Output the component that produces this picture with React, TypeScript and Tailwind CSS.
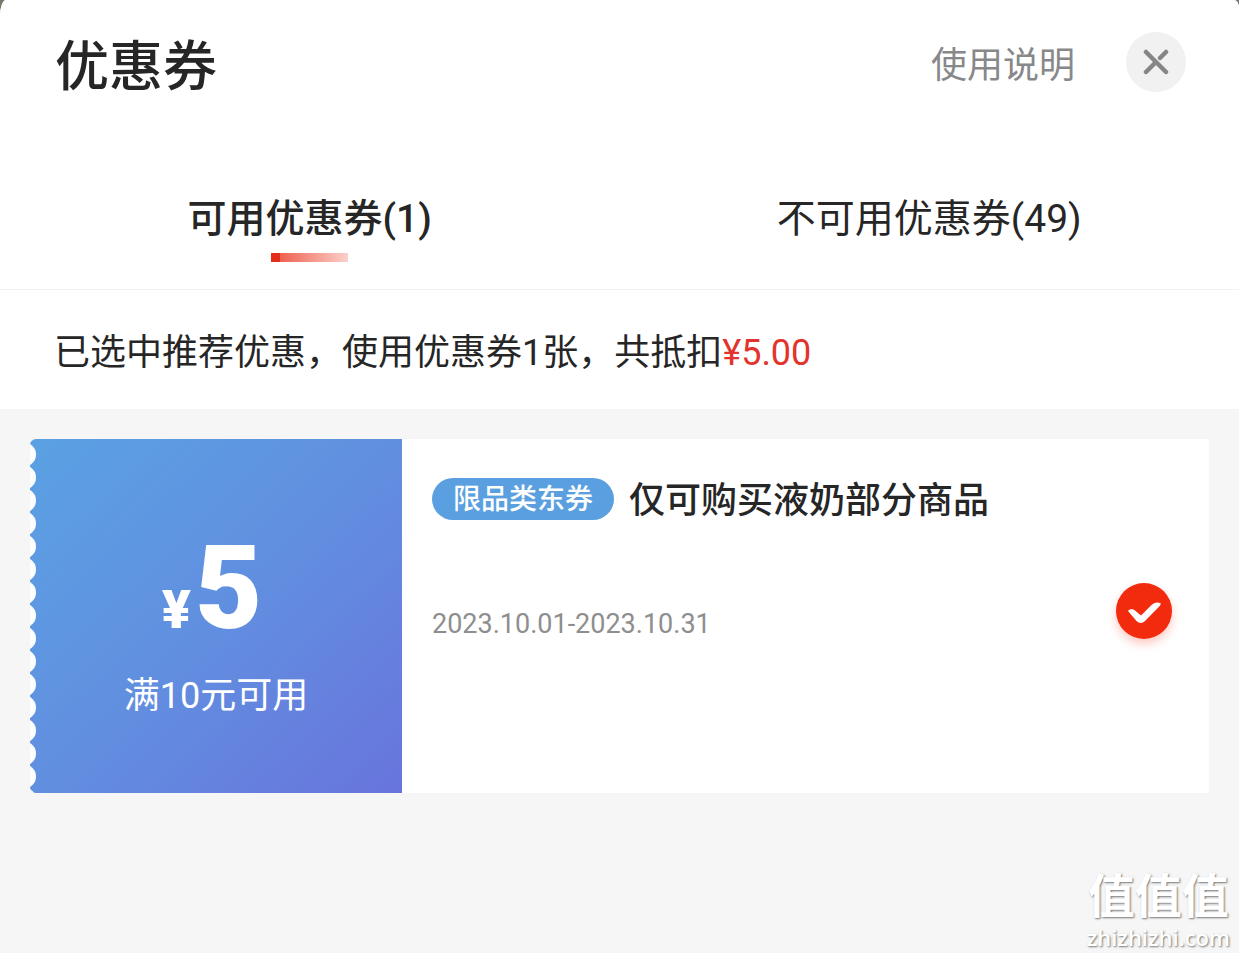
import { useState } from 'react'

const coupons = [
  { id: 1, amount: 5, condition: '满10元可用', tag: '限品类东券', title: '仅可购买液奶部分商品', period: '2023.10.01-2023.10.31' },
]

const tabs = [
  { key: 'usable', label: '可用优惠券', count: 1 },
  { key: 'unusable', label: '不可用优惠券', count: 49 },
]

// torn ticket edge, one notch every 23px
function TicketEdge() {
  return (
    <svg className="absolute left-0 top-0 h-full w-[6px]" aria-hidden="true">
      <defs>
        <pattern id="notch" width="6" height="23" y="4" patternUnits="userSpaceOnUse">
          <path d="M0 1C3 3 6 6 6 11.5S3 20 0 22Z" fill="#fcfdfd" />
        </pattern>
      </defs>
      <rect width="6" height="100%" fill="url(#notch)" />
    </svg>
  )
}

function CouponCard({ coupon }: { coupon: typeof coupons[number] }) {
  const [checked, setChecked] = useState(true)

  return (
    <li className="flex min-h-[354px]">
      <div className="relative flex w-[372px] shrink-0 flex-col items-center overflow-hidden rounded-l-md bg-linear-to-br from-[#5aa1e3] via-[#618fe0] to-[#6874dc] pt-[89px] text-white">
        <TicketEdge />
        <p className="flex items-baseline gap-1 pr-2 leading-[120px] font-black">
          <span className="text-[54px]">¥</span>
          <span className="text-[116px]">{coupon.amount}</span>
        </p>
        <p className="text-[36px] leading-[52px]">{coupon.condition}</p>
      </div>
      <div className="flex flex-1 items-center justify-between bg-white pr-[37px] pl-[30px]">
        <div className="self-stretch pt-[33px]">
          <h2 className="flex items-center gap-[15px]">
            <span className="flex h-[42px] items-center rounded-full bg-[#5aa0e0] px-[21px] pt-0.5 text-[28px] font-medium text-white">{coupon.tag}</span>
            <span className="pt-1 text-[36px] leading-[50px] font-medium text-[#262626]">{coupon.title}</span>
          </h2>
          <p className="mt-[78px] text-[27px] leading-[40px] text-[#8e8e8e]">{coupon.period}</p>
        </div>
        <label className="relative -mt-2.5 size-14 cursor-pointer">
          <input type="checkbox" aria-label={coupon.title} checked={checked} onChange={e => setChecked(e.target.checked)}
            className="block size-14 appearance-none rounded-full border-2 border-gray-300 checked:border-0 checked:bg-[#f22a0e] checked:shadow-[0_5px_10px_rgba(242,42,14,0.25)]" />
          {checked && (
            <svg viewBox="0 0 56 56" className="pointer-events-none absolute inset-0 size-14" aria-hidden="true">
              <path d="M12 28C13 26 17 25.500 19 27.500L25 32.500L35 22.500C38 19.500 42 18.500 44.800 20.500C44.800 22 43.500 23.200 42.500 24.200L29 38C26.500 40.500 23 40.500 20.500 38Z" fill="#fff" />
            </svg>
          )}
        </label>
      </div>
    </li>
  )
}

export default function App() {
  const [tab, setTab] = useState('usable')

  return (
    <div className="bg-[#77786a] font-[Roboto,'Noto_Sans_CJK_SC',sans-serif] text-[#262626]">
      <div className="relative flex min-h-screen flex-col overflow-hidden rounded-tl-[6px_16px] rounded-tr-[5px_8px] bg-[#f6f6f6]">
        <div className="bg-white">
          <header className="flex h-[136px] items-center justify-between pr-[53px] pl-[55px]">
            <h1 className="text-[54px] leading-[80px] font-medium">优惠券</h1>
            <div className="flex items-center gap-[51px]">
              <a href="#help" className="-mt-1 text-[36px] leading-[54px] text-[#87888a]">使用说明</a>
              <button type="button" aria-label="关闭" className="-mt-3 flex size-[60px] items-center justify-center rounded-full bg-[#f1f1f1]">
                <svg viewBox="0 0 26 26" className="size-[26px]" fill="none" stroke="#858585" strokeWidth="4.500" strokeLinecap="round" aria-hidden="true">
                  <path d="M3 3L23 23M3 23L11.500 14.500M17 9L23 3" />
                </svg>
              </button>
            </div>
          </header>

          <div role="tablist" className="flex h-[154px] border-b border-[#f2f2f2] pt-[53px]">
            {tabs.map(t => (
              <button key={t.key} type="button" role="tab" aria-selected={tab === t.key} onClick={() => setTab(t.key)}
                className="flex flex-1 flex-col items-center gap-1">
                <span className={tab === t.key ? 'text-[39px] leading-[60px] font-medium' : 'text-[39px] leading-[60px]'}>{t.label}({t.count})</span>
                {tab === t.key && (
                  <span className="h-[9px] w-[77px] bg-[linear-gradient(90deg,#e12d1a_9px,#ef6250_9px,#fbd0cb)]" />
                )}
              </button>
            ))}
          </div>

          <p className="pt-[38px] pr-8 pb-[30px] pl-[54px] text-[36px] leading-[51px]">
            已选中推荐优惠，使用优惠券1张，共抵扣<span className="text-[#e2342c]">¥5.00</span>
          </p>
        </div>

        <ul className="flex-1 p-[30px]">
          {tab === 'usable' && coupons.map(c => <CouponCard key={c.id} coupon={c} />)}
        </ul>

        <div className="absolute right-[9px] bottom-0.5 text-center text-white [text-shadow:1px_1px_2px_#777]">
          <p className="text-[47px] leading-[52px] font-bold">值值值</p>
          <p className="pt-1 pb-1 font-['Open_Sans',sans-serif] text-[22px] leading-[20px] font-semibold">zhizhizhi.com</p>
        </div>
      </div>
    </div>
  )
}
